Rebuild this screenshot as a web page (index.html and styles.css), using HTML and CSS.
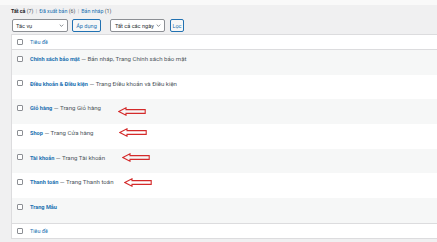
FILE: index.html
```html
<!DOCTYPE html>
<html lang="vi">
<head>
<meta charset="utf-8">
<title>Trang</title>
<link rel="stylesheet" href="styles.css">
</head>
<body>
<div class="topstrip"></div>
<div class="wrap">
  <div class="status">
    <span class="cur">Tất cả</span> <span class="count">(7)</span> <span class="sep">|</span>
    <a class="lnk">Đã xuất bản</a> <span class="count">(6)</span> <span class="sep">|</span>
    <a class="lnk">Bản nháp</a> <span class="count">(1)</span>
  </div>
  <div class="tablenav">
    <div class="select s1"><span>Tác vụ</span><svg class="chev" viewBox="0 0 8 5"><path d="M1 1l3 3 3-3" fill="none" stroke="#50575e" stroke-width="1.1"/></svg></div>
    <div class="btn b1">Áp dụng</div>
    <div class="select s2"><span>Tất cả các ngày</span><svg class="chev" viewBox="0 0 8 5"><path d="M1 1l3 3 3-3" fill="none" stroke="#50575e" stroke-width="1.1"/></svg></div>
    <div class="btn b2">Lọc</div>
  </div>
  <div class="table">
    <div class="head"><span class="cb"></span><span class="colname">Tiêu đề</span></div>
    <div class="row alt"><span class="cb"></span><span class="cell"><a class="title">Chính sách bảo mật</a> — Bản nháp, Trang Chính sách bảo mật</span></div>
    <div class="row"><span class="cb"></span><span class="cell"><a class="title">Điều khoản &amp; Điều kiện</a> — Trang Điều khoản và Điều kiện</span></div>
    <div class="row alt"><span class="cb"></span><span class="cell"><a class="title">Giỏ hàng</a> — Trang Giỏ hàng</span></div>
    <div class="row"><span class="cb"></span><span class="cell"><a class="title">Shop</a> — Trang Cửa hàng</span></div>
    <div class="row alt"><span class="cb"></span><span class="cell"><a class="title">Tài khoản</a> — Trang Tài khoản</span></div>
    <div class="row"><span class="cb"></span><span class="cell"><a class="title">Thanh toán</a> — Trang Thanh toán</span></div>
    <div class="row alt"><span class="cb"></span><span class="cell"><a class="title">Trang Mẫu</a></span></div>
    <div class="foot"><span class="cb"></span><span class="colname">Tiêu đề</span></div>

    <svg class="arrow a1" viewBox="0 0 28 9"><path d="M0.8 4.5L8 0.8V2.6H27.2V6.4H8V8.2Z" fill="none" stroke="#d42a2a" stroke-width="1.1" stroke-linejoin="miter"/></svg>
    <svg class="arrow a2" viewBox="0 0 28 9"><path d="M0.8 4.5L8 0.8V2.6H27.2V6.4H8V8.2Z" fill="none" stroke="#d42a2a" stroke-width="1.1" stroke-linejoin="miter"/></svg>
    <svg class="arrow a3" viewBox="0 0 28 9"><path d="M0.8 4.5L8 0.8V2.6H27.2V6.4H8V8.2Z" fill="none" stroke="#d42a2a" stroke-width="1.1" stroke-linejoin="miter"/></svg>
    <svg class="arrow a4" viewBox="0 0 28 9"><path d="M0.8 4.5L8 0.8V2.6H27.2V6.4H8V8.2Z" fill="none" stroke="#d42a2a" stroke-width="1.1" stroke-linejoin="miter"/></svg>
  </div>
</div>
</body>
</html>
```

FILE: styles.css
```css
html, body {
  margin: 0;
  padding: 0;
  background: #f0f0f1;
  overflow: hidden;
}
body {
  font-family: Roboto, "Noto Sans", sans-serif;
  color: #3c434a;
  height: 242px;
}
.topstrip {
  height: 5px;
  background: #f9f9f9;
}
.wrap {
  padding-left: 11px;
}
.status {
  height: 13px;
  line-height: 13px;
  font-size: 5.3px;
  color: #50575e;
  white-space: nowrap;
}
.status .cur {
  color: #1d2327;
  font-weight: 700;
}
.status .count {
  color: #50575e;
}
.status .sep {
  color: #a7aaad;
  margin: 0 1px;
}
.lnk {
  color: #2271b1;
}
.tablenav {
  display: flex;
  align-items: center;
  margin-top: 1px;
  height: 13px;
  margin-bottom: 2px;
  padding-left: 1px;
}
.select {
  box-sizing: border-box;
  height: 13px;
  border: 1px solid #8c8f94;
  border-radius: 2px;
  background: #fff;
  display: flex;
  align-items: center;
  justify-content: space-between;
  padding: 0 3px 0 3px;
  font-size: 5.6px;
  color: #2c3338;
}
.s1 { width: 56px; }
.s2 { width: 55px; margin-left: 9px; padding-left: 4px; }
.chev {
  width: 5px;
  height: 3px;
}
.btn {
  box-sizing: border-box;
  height: 13px;
  border: 1px solid #2271b1;
  border-radius: 2px;
  background: #f6f7f7;
  color: #2271b1;
  font-size: 5.6px;
  display: flex;
  align-items: center;
  justify-content: center;
}
.b1 { width: 29px; margin-left: 4px; }
.b2 { width: 14px; margin-left: 5px; }
.table {
  position: relative;
  border-top: 1px solid #dcdcde;
  border-bottom: 1px solid #dcdcde;
  border-left: 1px solid #dcdcde;
  background: #fff;
}
.head, .foot {
  height: 14px;
  display: flex;
  align-items: center;
  background: #fff;
}
.head { border-bottom: 1px solid #dcdcde; }
.foot { border-top: 1px solid #dcdcde; }
.cb {
  box-sizing: border-box;
  width: 6px;
  height: 6px;
  border: 1px solid #8c8f94;
  border-radius: 1px;
  background: #fff;
  margin-left: 5px;
  flex: none;
}
.colname {
  margin-left: 7px;
  font-size: 5.4px;
  color: #2271b1;
}
.row {
  height: 24.7px;
  box-sizing: border-box;
  display: flex;
  align-items: flex-start;
  padding-top: 4px;
  background: #fff;
}
.row.alt {
  background: #f6f7f7;
}
.row .cb {
  margin-top: 1.6px;
}
.cell {
  margin-left: 7px;
  font-size: 6.1px;
  line-height: 9px;
  color: #50575e;
  white-space: nowrap;
}
.title {
  color: #2271b1;
  font-weight: 700;
  font-size: 5.6px;
}
.arrow {
  position: absolute;
  width: 28px;
  height: 9px;
}
.a1 { left: 106px; top: 72px; }
.a2 { left: 107px; top: 93px; }
.a3 { left: 110px; top: 118px; }
.a4 { left: 112px; top: 143px; }
```
